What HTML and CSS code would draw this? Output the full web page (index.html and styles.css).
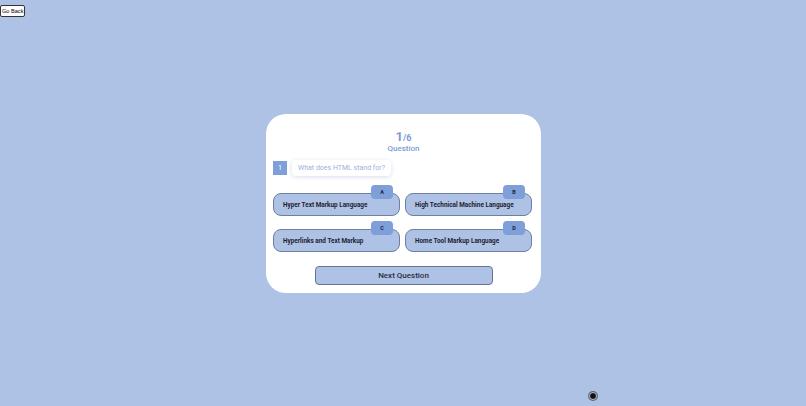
FILE: index.html
```html
<!DOCTYPE html>
<html>
<head>
<meta charset="utf-8">
<link rel="stylesheet" href="styles.css">
</head>
<body>
<button class="back">Go Back</button>
<main class="stage">
  <section class="card">
    <div class="count"><span class="cur">1</span><span class="tot">/6</span></div>
    <div class="label">Question</div>
    <div class="qrow">
      <span class="qnum">1</span>
      <span class="qtext">What does HTML stand for?</span>
    </div>
    <div class="answers">
      <div class="opt"><span class="tag">A</span>Hyper Text Markup Language</div>
      <div class="opt"><span class="tag">B</span>High Technical Machine Language</div>
      <div class="opt"><span class="tag">C</span>Hyperlinks and Text Markup</div>
      <div class="opt"><span class="tag">D</span>Home Tool Markup Language</div>
    </div>
    <div class="foot"><button class="next">Next Question</button></div>
  </section>
</main>
<span class="dot"></span>
</body>
</html>
```
FILE: styles.css
```css
html, body { margin: 0; padding: 0; }
body {
  background: #aec2e6;
  font-family: "Roboto", "Liberation Sans", sans-serif;
  min-height: 406px;
}
.back {
  position: absolute;
  top: 5px;
  left: 0;
  font-family: "Liberation Sans", sans-serif;
  font-size: 5.6px;
  padding: 2px 1px;
  background: #fff;
  border: 1px solid #333;
  border-radius: 2px;
  color: #000;
  line-height: 6px;
}
.stage {
  min-height: 406px;
  display: flex;
  align-items: center;
  justify-content: center;
  padding-left: 1px;
  box-sizing: border-box;
}
.card {
  width: 275px;
  height: 179px;
  box-sizing: border-box;
  background: #fff;
  border-radius: 20px;
  padding: 16px 9px 0 7px;
}
.count {
  text-align: center;
  color: #7c9bd8;
  font-weight: 700;
  line-height: 12px;
  margin-left: 2px;
}
.cur { font-size: 13px; }
.tot { font-size: 9px; }
.label {
  text-align: center;
  color: #7c9bd8;
  font-size: 8px;
  font-weight: 500;
  line-height: 10px;
  margin-left: 2px;
}
.qrow {
  display: flex;
  align-items: center;
  gap: 5px;
  margin-top: 6px;
}
.qnum {
  width: 14px;
  height: 14px;
  background: #7e9fd9;
  color: #fff;
  font-size: 7px;
  display: flex;
  align-items: center;
  justify-content: center;
}
.qtext {
  height: 16px;
  padding: 0 6px;
  display: flex;
  align-items: center;
  font-size: 7px;
  color: #9db0e0;
  background: #fff;
  border-radius: 4px;
  box-shadow: 0 1px 4px rgba(100, 120, 170, 0.25);
}
.answers {
  display: grid;
  grid-template-columns: 127px 127px;
  column-gap: 5px;
  row-gap: 13px;
  margin-top: 17px;
}
.opt {
  position: relative;
  height: 23px;
  box-sizing: border-box;
  background: #aec2e6;
  border: 1px solid #6f7f9e;
  border-radius: 8px;
  font-size: 6.4px;
  font-weight: 700;
  color: #1e2230;
  display: flex;
  align-items: center;
  padding-left: 9px;
  padding-top: 1px;
}
.tag {
  position: absolute;
  top: -9px;
  right: 6px;
  width: 22px;
  height: 14px;
  border-radius: 4px;
  background: #7e9fd9;
  font-size: 5.5px;
  font-weight: 700;
  color: #1e2230;
  display: flex;
  align-items: center;
  justify-content: center;
}
.foot {
  display: flex;
  justify-content: center;
  margin-top: 14px;
  padding-left: 2px;
}
.next {
  width: 178px;
  height: 19px;
  background: #aec2e6;
  border: 1px solid #66748f;
  border-radius: 4px;
  font-family: "Roboto", "Liberation Sans", sans-serif;
  font-size: 8px;
  font-weight: 500;
  color: #2a2f3c;
  padding: 0;
}
.dot {
  position: absolute;
  left: 589px;
  top: 392px;
  width: 6px;
  height: 6px;
  border-radius: 50%;
  background: #111;
  border: 1.5px solid #aec2e6;
  box-shadow: 0 0 0 1px #666;
}
```
